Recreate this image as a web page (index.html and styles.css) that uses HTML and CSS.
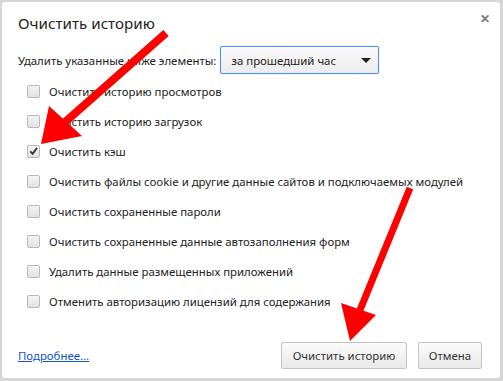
FILE: index.html
```html
<!DOCTYPE html>
<html lang="ru">
<head>
<meta charset="utf-8">
<link rel="stylesheet" href="styles.css">
</head>
<body>
<div class="dialog">
  <div class="head">
    <h1 class="title">Очистить историю</h1>
    <span class="close">&#x2715;</span>
  </div>
  <div class="period">
    <span class="period-label">Удалить указанные ниже элементы:</span>
    <div class="select"><span>за прошедший час</span><span class="caret"></span></div>
  </div>
  <ul class="options">
    <li><span class="cb"></span>Очистить историю просмотров</li>
    <li><span class="cb"></span>Очистить историю загрузок</li>
    <li><span class="cb checked"><svg viewBox="0 0 12 12" width="12" height="12"><path d="M2.5 6.5 L5 9 L9.8 2.6" fill="none" stroke="#333" stroke-width="2"/></svg></span>Очистить кэш</li>
    <li><span class="cb"></span>Очистить файлы cookie и другие данные сайтов и подключаемых модулей</li>
    <li><span class="cb"></span>Очистить сохраненные пароли</li>
    <li><span class="cb"></span>Очистить сохраненные данные автозаполнения форм</li>
    <li><span class="cb"></span>Удалить данные размещенных приложений</li>
    <li><span class="cb"></span>Отменить авторизацию лицензий для содержания</li>
  </ul>
  <div class="footer">
    <a class="more" href="#">Подробнее...</a>
    <div class="buttons">
      <button class="btn primary">Очистить историю</button>
      <button class="btn">Отмена</button>
    </div>
  </div>
  <svg class="arrows" width="503" height="381" viewBox="0 0 503 381">
    <line x1="166" y1="33" x2="64" y2="123" stroke="#ff0000" stroke-width="8"/>
    <polygon points="41,144 49,106 82,136" fill="#ff0000"/>
    <line x1="410" y1="188" x2="360" y2="310" stroke="#ff0000" stroke-width="7"/>
    <polygon points="350,341 341,303 376,315" fill="#ff0000"/>
  </svg>
</div>
</body>
</html>
```

FILE: styles.css
```css
* { box-sizing: border-box; }
html, body { margin: 0; padding: 0; }
body {
  width: 503px;
  height: 381px;
  background: #d6d6d6;
  font-family: "Noto Sans", "Open Sans", sans-serif;
  font-size: 11.4px;
  color: #222;
  overflow: hidden;
}
.dialog {
  position: relative;
  margin: 2px 3px 0 2px;
  height: 376px;
  background: #fff;
  border-radius: 3px;
  padding: 0 18px 0 16px;
  white-space: nowrap;
}
.head {
  display: flex;
  justify-content: space-between;
  align-items: flex-start;
  height: 44px;
}
.title {
  margin: 0;
  padding-top: 11px;
  font-size: 15.2px;
  font-weight: normal;
  color: #222;
}
.close {
  margin-top: 8px;
  margin-right: -8px;
  font-size: 12px;
  font-weight: bold;
  color: #777;
}
.period {
  display: flex;
  align-items: center;
  gap: 4px;
  height: 28px;
}
.select {
  width: 159px;
  height: 28px;
  border: 1px solid #4d90fe;
  border-radius: 2px;
  background: linear-gradient(#fafafa, #ececec);
  display: flex;
  align-items: center;
  justify-content: space-between;
  padding: 0 7px 0 10px;
  box-shadow: 0 0 1px #4d90fe;
}
.caret {
  width: 0; height: 0;
  border-left: 5px solid transparent;
  border-right: 5px solid transparent;
  border-top: 5px solid #222;
}
.options {
  list-style: none;
  margin: 0;
  padding: 2px 0 0 9px;
}
.options li {
  display: flex;
  align-items: center;
  height: 30px;
  gap: 9px;
}
.cb {
  width: 13px;
  height: 13px;
  border: 1px solid #b8b8b8;
  border-radius: 2px;
  background: linear-gradient(#f4f4f4, #e2e2e2);
  display: flex;
  align-items: center;
  justify-content: center;
}
.cb svg { display: block; }
.footer {
  display: flex;
  justify-content: space-between;
  align-items: center;
  margin-top: 26px;
}
.more {
  color: #15c;
  text-decoration: underline;
}
.buttons {
  display: flex;
  gap: 11px;
}
.btn {
  font-family: inherit;
  font-size: 11.4px;
  color: #333;
  height: 27px;
  padding: 0;
  border: 1px solid #c4c4c4;
  border-radius: 2px;
  background: linear-gradient(#fafafa, #e9e9e9);
}
.btn.primary { width: 126px; }
.btn:not(.primary) { width: 64px; }
.arrows {
  position: absolute;
  left: -2px;
  top: -2px;
}
```
